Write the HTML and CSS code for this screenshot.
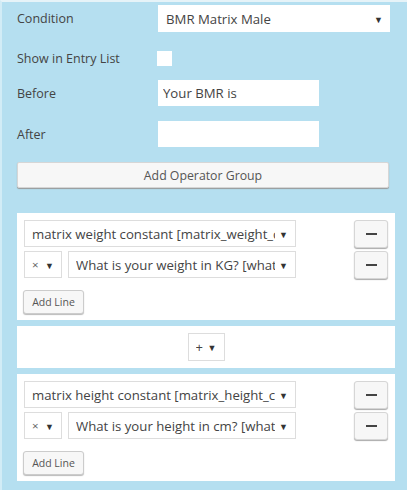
FILE: index.html
```html
<!DOCTYPE html>
<html lang="en">
  <head>
    <meta charset="UTF-8" />
    <meta name="viewport" content="width=device-width, initial-scale=1.0" />
    <title>Calculation Field</title>
    <link rel="stylesheet" href="styles.css">
  </head>
  <body>
    <div class="panel">
      <div class="row row-condition">
        <label class="label">Condition</label>
        <div class="pick pick-plain pick-condition">
          <select class="select">
            <option>BMR Matrix Male</option>
          </select>
          <span class="arrow">&#9660;</span>
        </div>
      </div>
      <div class="row row-check">
        <label class="label">Show in Entry List</label>
        <input type="checkbox" class="check" />
      </div>
      <div class="row row-before">
        <label class="label">Before</label>
        <input type="text" class="text" value="Your BMR is" />
      </div>
      <div class="row row-after">
        <label class="label">After</label>
        <input type="text" class="text" value="" />
      </div>
      <button class="group-button" type="button">Add Operator Group</button>

      <div class="card">
        <div class="line">
          <div class="pick pick-field pick-wide">
            <select class="select">
              <option>matrix weight constant [matrix_weight_constant]</option>
            </select>
            <span class="arrow">&#9660;</span>
          </div>
          <button class="minus" type="button"><span class="bar"></span></button>
        </div>
        <div class="line">
          <div class="pair">
            <div class="pick pick-field pick-op">
              <select class="select select-op">
                <option>&times;</option>
              </select>
              <span class="arrow">&#9660;</span>
            </div>
            <div class="pick pick-field pick-name">
              <select class="select">
                <option>What is your weight in KG? [what_is_your_weight]</option>
              </select>
              <span class="arrow">&#9660;</span>
            </div>
          </div>
          <button class="minus" type="button"><span class="bar"></span></button>
        </div>
        <button class="add-line" type="button">Add Line</button>
      </div>

      <div class="card card-operator">
        <div class="pick pick-field pick-op">
          <select class="select select-plus">
            <option>+</option>
          </select>
          <span class="arrow">&#9660;</span>
        </div>
      </div>

      <div class="card">
        <div class="line">
          <div class="pick pick-field pick-wide">
            <select class="select">
              <option>matrix height constant [matrix_height_constant]</option>
            </select>
            <span class="arrow">&#9660;</span>
          </div>
          <button class="minus" type="button"><span class="bar"></span></button>
        </div>
        <div class="line">
          <div class="pair">
            <div class="pick pick-field pick-op">
              <select class="select select-op">
                <option>&times;</option>
              </select>
              <span class="arrow">&#9660;</span>
            </div>
            <div class="pick pick-field pick-name">
              <select class="select">
                <option>What is your height in cm? [what_is_your_height]</option>
              </select>
              <span class="arrow">&#9660;</span>
            </div>
          </div>
          <button class="minus" type="button"><span class="bar"></span></button>
        </div>
        <button class="add-line" type="button">Add Line</button>
      </div>
    </div>
  </body>
</html>
```

FILE: styles.css
```css
html,
body {
  margin: 0;
  height: 100%;
}
body {
  background-color: #b5dff0;
  font-family: "Open Sans", "Noto Sans", sans-serif;
  color: #444;
}
.panel {
  box-sizing: border-box;
  height: 100%;
  border-top: 2px solid #e6f3f8;
  border-left: 2px solid #d2ecf6;
  padding: 3px 12px 0 15px;
}
.row {
  display: flex;
  align-items: center;
}
.label {
  width: 141px;
  flex: none;
  font-size: 12.5px;
  color: #444;
}
.row-check {
  margin-top: 19px;
  height: 15px;
}
.row-before {
  margin-top: 14px;
}
.row-after {
  margin-top: 15px;
}
.pick {
  position: relative;
  box-sizing: border-box;
  background-color: #fff;
}
.pick-plain {
  height: 27px;
}
.pick-condition {
  width: 232px;
}
.select {
  appearance: none;
  -webkit-appearance: none;
  border: 0;
  outline: 0;
  background: transparent;
  width: 100%;
  height: 100%;
  margin: 0;
  padding: 0 20px 0 8px;
  font-family: inherit;
  font-size: 13.2px;
  color: #444;
}
.arrow {
  position: absolute;
  right: 7px;
  top: 50%;
  transform: translateY(-50%);
  font-size: 9px;
  color: #333;
  pointer-events: none;
}
.check {
  appearance: none;
  -webkit-appearance: none;
  margin: 0 0 0 -1px;
  width: 15px;
  height: 15px;
  background-color: #fff;
  border: 0;
}
.text {
  box-sizing: border-box;
  width: 161px;
  height: 26px;
  border: 0;
  outline: 0;
  margin: 0;
  padding: 0 5px;
  font-family: inherit;
  font-size: 13.2px;
  color: #444;
  background-color: #fff;
}
.group-button {
  display: block;
  box-sizing: border-box;
  width: 372px;
  height: 26px;
  margin-top: 15px;
  border: 1px solid #d6d6d6;
  border-radius: 2px;
  background-color: #f7f7f7;
  box-shadow: 0 1px 1px #999;
  font-family: inherit;
  font-size: 12.3px;
  color: #555;
}
.card {
  background-color: #fff;
  padding: 7px 7px 6px 7px;
  margin-top: 6px;
}
.group-button + .card {
  margin-top: 25px;
}
.line {
  display: flex;
  justify-content: space-between;
  align-items: flex-start;
  margin-bottom: 3px;
}
.pick-field {
  height: 27px;
  border: 1px solid #ddd;
}
.pick-field .select {
  padding-left: 7px;
}
.pick-wide {
  width: 272px;
}
.pair {
  display: flex;
  gap: 6px;
}
.pick-op {
  width: 38px;
}
.pick-name {
  width: 228px;
}
.select-op {
  font-size: 11.5px;
  color: #666;
}
.select-plus {
  font-size: 13px;
  color: #444;
}
.pick-op .arrow {
  right: 7px;
}
.minus {
  display: flex;
  justify-content: center;
  align-items: center;
  box-sizing: border-box;
  width: 34px;
  height: 28px;
  padding: 0;
  border: 1px solid #d6d6d6;
  border-radius: 3px;
  background-color: #f7f7f7;
  box-shadow: 0 1px 1px #aaa;
}
.bar {
  display: block;
  width: 11px;
  height: 2px;
  background-color: #444;
}
.add-line {
  display: block;
  box-sizing: border-box;
  width: 61px;
  height: 24px;
  margin: 11px 0 0 -1px;
  padding: 0;
  border: 1px solid #ccc;
  border-radius: 3px;
  background-color: #f7f7f7;
  box-shadow: 0 1px 1px #bbb;
  font-family: inherit;
  font-size: 10.5px;
  color: #555;
}
.card-operator {
  display: flex;
  justify-content: center;
  padding: 7px;
}
.card-operator .pick-op {
  width: 37px;
  height: 28px;
}
```
